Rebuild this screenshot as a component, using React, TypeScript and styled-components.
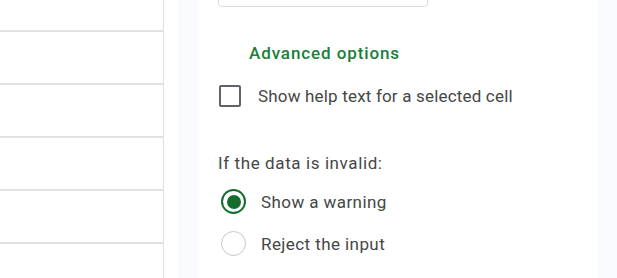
import styled, { createGlobalStyle } from 'styled-components';

const GlobalStyle = createGlobalStyle`
  html, body {
    margin: 0;
    padding: 0;
    background: #f8fafd;
    font-family: Roboto, 'Liberation Sans', Arial, sans-serif;
  }
  * {
    box-sizing: border-box;
  }
`;

const Page = styled.div`
  display: flex;
  height: 278px;
  overflow: hidden;
`;

const SheetArea = styled.div`
  width: 178px;
  flex-shrink: 0;
  background: #fff;
  overflow: hidden;
`;

const CellColumn = styled.div`
  width: 164px;
  height: calc(100% + 21px);
  margin-top: -21px;
  border-right: 1px solid #e1e1e1;
`;

const Cell = styled.div`
  height: 53px;
  border-bottom: 2px solid #e1e1e1;
`;

const Sidebar = styled.div`
  flex: 1;
  display: flex;
  padding: 0 19px 0 20px;
  background: #f8fafd;
`;

const Card = styled.div`
  width: 400px;
  background: #fff;
  padding: 0 20px;
  display: flex;
  flex-direction: column;
  align-items: flex-start;
`;

const TextInput = styled.div`
  width: 210px;
  height: 36px;
  margin-top: -29px;
  border: 1px solid #dadce0;
  border-radius: 4px;
`;

const LinkButton = styled.button`
  margin-top: 34px;
  padding: 0 0 0 31px;
  border: none;
  background: none;
  font-family: inherit;
  font-size: 17px;
  line-height: 24px;
  font-weight: 500;
  letter-spacing: 0.9px;
  color: #188038;
  cursor: pointer;
`;

const OptionRow = styled.label<{ $top: number; $spacing: number }>`
  display: flex;
  align-items: center;
  margin-top: ${(p) => p.$top}px;
  font-size: 17px;
  line-height: 24px;
  letter-spacing: ${(p) => p.$spacing}px;
  color: #444746;
  cursor: pointer;
`;

const CheckBox = styled.span`
  width: 22px;
  height: 22px;
  margin: 0 17px 0 1px;
  border: 2px solid #5f6368;
  border-radius: 2px;
`;

const Radio = styled.span<{ $checked?: boolean }>`
  width: 25px;
  height: 25px;
  margin: 0 15px 0 3px;
  border-radius: 50%;
  border: ${(p) => (p.$checked ? '2.5px solid #146c2e' : '1px solid #c7c7c7')};
  display: flex;
  align-items: center;
  justify-content: center;
  &::after {
    content: '';
    display: ${(p) => (p.$checked ? 'block' : 'none')};
    width: 14px;
    height: 14px;
    border-radius: 50%;
    background: #146c2e;
  }
`;

const SectionLabel = styled.div`
  margin-top: 43px;
  font-size: 17px;
  line-height: 24px;
  letter-spacing: 0.6px;
  color: #444746;
`;

const App = () => {
  return (
    <>
      <GlobalStyle />
      <Page>
        <SheetArea>
          <CellColumn>
            {[0, 1, 2, 3, 4, 5].map((i) => (
              <Cell key={i} />
            ))}
          </CellColumn>
        </SheetArea>
        <Sidebar>
          <Card>
            <TextInput />
            <LinkButton>Advanced options</LinkButton>
            <OptionRow $top={19} $spacing={0.18}>
              <CheckBox />
              Show help text for a selected cell
            </OptionRow>
            <SectionLabel>If the data is invalid:</SectionLabel>
            <OptionRow $top={14} $spacing={0.42}>
              <Radio $checked />
              Show a warning
            </OptionRow>
            <OptionRow $top={17} $spacing={0.42}>
              <Radio />
              Reject the input
            </OptionRow>
          </Card>
        </Sidebar>
      </Page>
    </>
  );
};

export default App;
